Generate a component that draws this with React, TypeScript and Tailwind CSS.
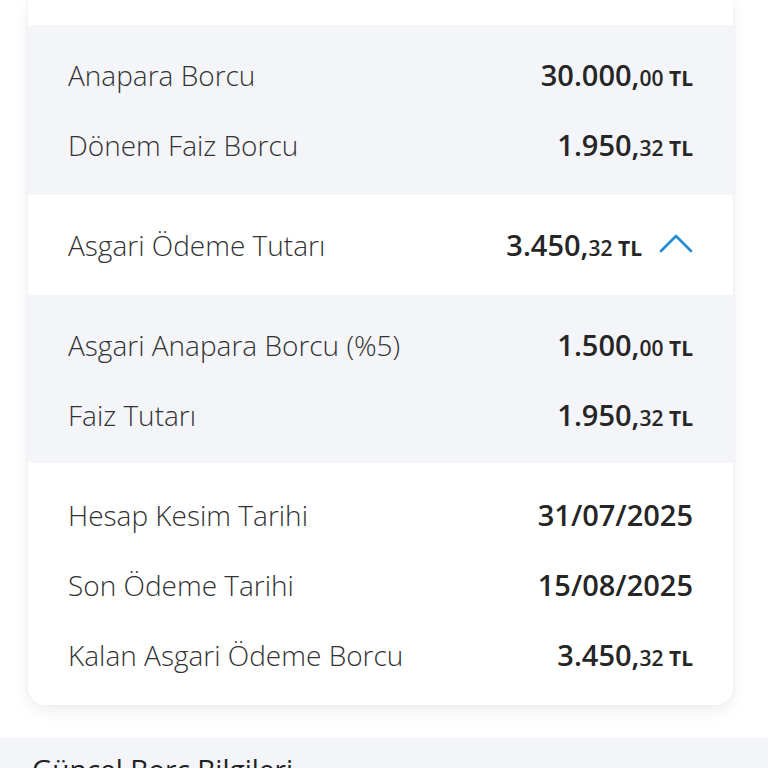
type Row = { label: string; whole: string; frac?: string }

const principal: Row[] = [
  { label: "Anapara Borcu", whole: "30.000,", frac: "00" },
  { label: "Dönem Faiz Borcu", whole: "1.950,", frac: "32" },
]

const minimumBreakdown: Row[] = [
  { label: "Asgari Anapara Borcu (%5)", whole: "1.500,", frac: "00" },
  { label: "Faiz Tutarı", whole: "1.950,", frac: "32" },
]

const statement: Row[] = [
  { label: "Hesap Kesim Tarihi", whole: "31/07/2025" },
  { label: "Son Ödeme Tarihi", whole: "15/08/2025" },
  { label: "Kalan Asgari Ödeme Borcu", whole: "3.450,", frac: "32" },
]

function Amount({ whole, frac }: { whole: string; frac?: string }) {
  return (
    <span className="font-semibold text-[#262626] whitespace-nowrap">
      <span className="text-[29px]">{whole}</span>
      {frac !== undefined && (
        <span className="text-[21px]">
          {frac} <span className="font-bold">TL</span>
        </span>
      )}
    </span>
  )
}

function DetailRow({ row }: { row: Row }) {
  return (
    <div className="h-[70px] flex items-center justify-between">
      <span className="text-[28px] font-light text-[#333]">{row.label}</span>
      <Amount whole={row.whole} frac={row.frac} />
    </div>
  )
}

export default function App() {
  return (
    <div
      className="h-[768px] w-[768px] overflow-hidden bg-white flex flex-col"
      style={{ fontFamily: '"Open Sans", "Noto Sans", sans-serif' }}
    >
      <div className="shrink-0 mx-[28px] w-[705px] bg-white rounded-b-[18px] shadow-[0_6px_16px_rgba(20,30,60,0.07),0_0_6px_rgba(20,30,60,0.04)] overflow-hidden">
        <div className="h-[25px] bg-white" />

        <div className="bg-[#f4f5f9] px-10 pt-[15px] pb-[15px]">
          {principal.map((r) => (
            <DetailRow key={r.label} row={r} />
          ))}
        </div>

        <div className="h-[100px] px-10 flex items-center justify-between bg-white">
          <span className="text-[28px] font-light text-[#333]">Asgari Ödeme Tutarı</span>
          <div className="flex items-center gap-[17px]">
            <Amount whole="3.450," frac="32" />
            <svg width="34" height="20" viewBox="0 0 34 20" fill="none" className="mb-[4px]">
              <polyline
                points="2,18 17,3 32,18"
                stroke="#1f8dd6"
                strokeWidth="2.6"
                strokeLinecap="round"
                strokeLinejoin="round"
              />
            </svg>
          </div>
        </div>

        <div className="bg-[#f4f5f9] px-10 pt-[15px] pb-[13px]">
          {minimumBreakdown.map((r) => (
            <DetailRow key={r.label} row={r} />
          ))}
        </div>

        <div className="bg-white px-10 pt-[17px] pb-[15px]">
          {statement.map((r) => (
            <DetailRow key={r.label} row={r} />
          ))}
        </div>
      </div>

      <div className="mt-[33px] flex-1 bg-[#f4f5f8] px-8 pt-[10px]">
        <h2 className="text-[28px] font-medium text-[#222]">Güncel Borç Bilgileri</h2>
      </div>
    </div>
  )
}
